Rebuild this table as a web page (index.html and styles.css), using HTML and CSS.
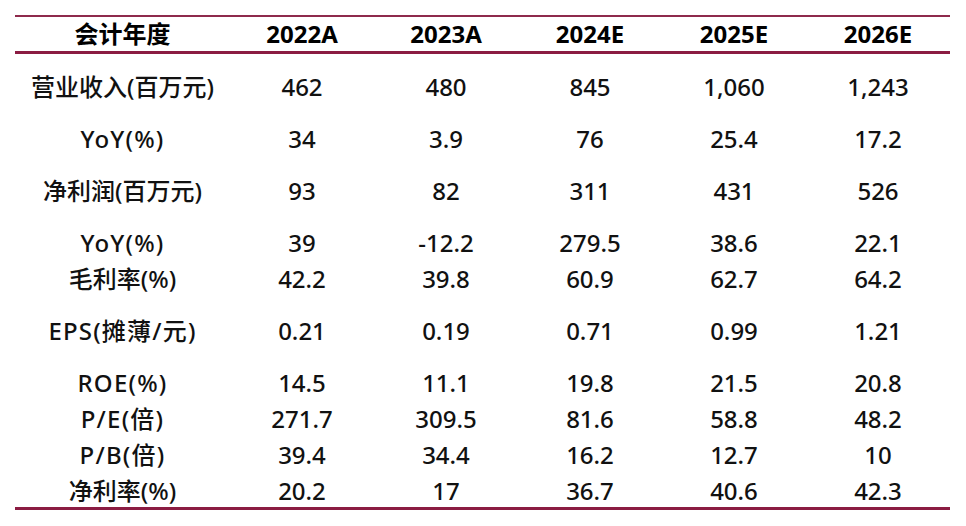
FILE: index.html
```html
<!DOCTYPE html>
<html lang="zh-CN">
<head>
<meta charset="utf-8">
<title>盈利预测</title>
<link rel="stylesheet" href="styles.css">
</head>
<body>
<div class="sheet">
  <div class="head row">
    <div class="cell label">会计年度</div>
    <div class="cell">2022A</div>
    <div class="cell">2023A</div>
    <div class="cell">2024E</div>
    <div class="cell">2025E</div>
    <div class="cell">2026E</div>
  </div>
  <div class="body">
    <div class="row gap">
      <div class="cell label">营业收入(百万元)</div>
      <div class="cell">462</div><div class="cell">480</div><div class="cell">845</div><div class="cell">1,060</div><div class="cell">1,243</div>
    </div>
    <div class="row gap">
      <div class="cell label wide">YoY(%)</div>
      <div class="cell">34</div><div class="cell">3.9</div><div class="cell">76</div><div class="cell">25.4</div><div class="cell">17.2</div>
    </div>
    <div class="row gap">
      <div class="cell label">净利润(百万元)</div>
      <div class="cell">93</div><div class="cell">82</div><div class="cell">311</div><div class="cell">431</div><div class="cell">526</div>
    </div>
    <div class="row">
      <div class="cell label wide">YoY(%)</div>
      <div class="cell">39</div><div class="cell">-12.2</div><div class="cell">279.5</div><div class="cell">38.6</div><div class="cell">22.1</div>
    </div>
    <div class="row gap">
      <div class="cell label">毛利率(%)</div>
      <div class="cell">42.2</div><div class="cell">39.8</div><div class="cell">60.9</div><div class="cell">62.7</div><div class="cell">64.2</div>
    </div>
    <div class="row gap">
      <div class="cell label wide">EPS(摊薄/元)</div>
      <div class="cell">0.21</div><div class="cell">0.19</div><div class="cell">0.71</div><div class="cell">0.99</div><div class="cell">1.21</div>
    </div>
    <div class="row">
      <div class="cell label wide">ROE(%)</div>
      <div class="cell">14.5</div><div class="cell">11.1</div><div class="cell">19.8</div><div class="cell">21.5</div><div class="cell">20.8</div>
    </div>
    <div class="row">
      <div class="cell label wide">P/E(倍)</div>
      <div class="cell">271.7</div><div class="cell">309.5</div><div class="cell">81.6</div><div class="cell">58.8</div><div class="cell">48.2</div>
    </div>
    <div class="row">
      <div class="cell label wide">P/B(倍)</div>
      <div class="cell">39.4</div><div class="cell">34.4</div><div class="cell">16.2</div><div class="cell">12.7</div><div class="cell">10</div>
    </div>
    <div class="row last">
      <div class="cell label">净利率(%)</div>
      <div class="cell">20.2</div><div class="cell">17</div><div class="cell">36.7</div><div class="cell">40.6</div><div class="cell">42.3</div>
    </div>
  </div>
</div>
</body>
</html>
```
FILE: styles.css
```css
html, body {
  margin: 0;
  padding: 0;
  background: #ffffff;
}

body {
  font-family: "Noto Sans", "Noto Sans CJK SC", sans-serif;
  font-size: 24px;
  font-weight: 500;
  color: #111111;
}

.sheet {
  width: 935px;
  margin: 15px 0 0 15px;
  border-top: 2px solid #8e2a4c;
  border-bottom: 3px solid #8b1c42;
}

.row {
  display: grid;
  grid-template-columns: 215px repeat(5, 144px);
  line-height: 36px;
}

.cell {
  text-align: center;
  white-space: nowrap;
}

.wide {
  letter-spacing: 1.2px;
}

.head {
  height: 34px;
  line-height: 34px;
  font-weight: 700;
  color: #000000;
  border-bottom: 3px solid #8b1c42;
}

.body {
  padding-top: 15px;
}

.gap {
  margin-bottom: 16px;
}

.last {
  height: 34px;
}
```
